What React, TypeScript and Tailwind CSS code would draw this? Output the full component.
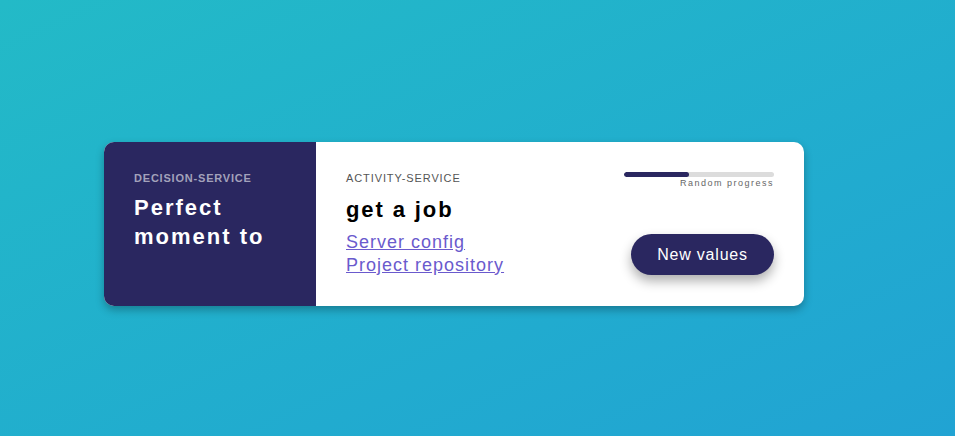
import React, { useState } from "react";

export default function App() {
  const [progress, setProgress] = useState(43);

  return (
    <main className="min-h-screen w-full bg-linear-to-br from-[#23bac7] to-[#21a3d3] pt-[142px] pl-[104px] font-['Liberation_Sans',Arial,sans-serif]">
      <div className="flex h-[164px] w-[700px] overflow-hidden rounded-[10px] bg-white shadow-[0_4px_8px_rgba(0,0,0,0.28)]">
        <div className="w-[212px] shrink-0 bg-[#2a2760] px-[30px] pt-[30px]">
          <h6 className="text-[11px] leading-[13px] font-bold tracking-[0.8px] text-[#a3a2bb] uppercase">
            Decision-service
          </h6>
          <h2 className="mt-[8px] text-[22px] leading-[29px] font-bold tracking-[2px] text-white">
            Perfect moment to
          </h2>
        </div>
        <div className="flex flex-1 justify-between px-[30px] py-[30px]">
          <div>
            <h6 className="text-[11px] leading-[13px] tracking-[0.9px] text-[#555] uppercase">
              Activity-service
            </h6>
            <h2 className="mt-[10px] text-[22px] leading-[29px] font-bold tracking-[1.9px] text-black">
              get a job
            </h2>
            <div className="mt-[7px] text-[18px] leading-[22.5px] tracking-[1px]">
              <a href="#" className="block text-[#6a5acd] underline">
                Server config
              </a>
              <a href="#" className="block text-[#6a5acd] underline">
                Project repository
              </a>
            </div>
          </div>
          <div className="flex flex-col items-end justify-between">
            <div className="w-[150px]">
              <div className="h-[5px] w-full overflow-hidden rounded-full bg-[#dcdcdc]">
                <div className="h-full rounded-full bg-[#2a2760]" style={{ width: `${progress}%` }} />
              </div>
              <p className="mt-[1px] text-right text-[9px] leading-[11px] tracking-[1.5px] text-[#666]">
                Random progress
              </p>
            </div>
            <button
              onClick={() => setProgress(Math.round(Math.random() * 100))}
              className="mb-[1px] h-[41px] w-[143px] rounded-full bg-[#2a2760] text-[16px] tracking-[0.8px] text-white shadow-[0_6px_12px_rgba(0,0,0,0.32)]"
            >
              New values
            </button>
          </div>
        </div>
      </div>
    </main>
  );
}
